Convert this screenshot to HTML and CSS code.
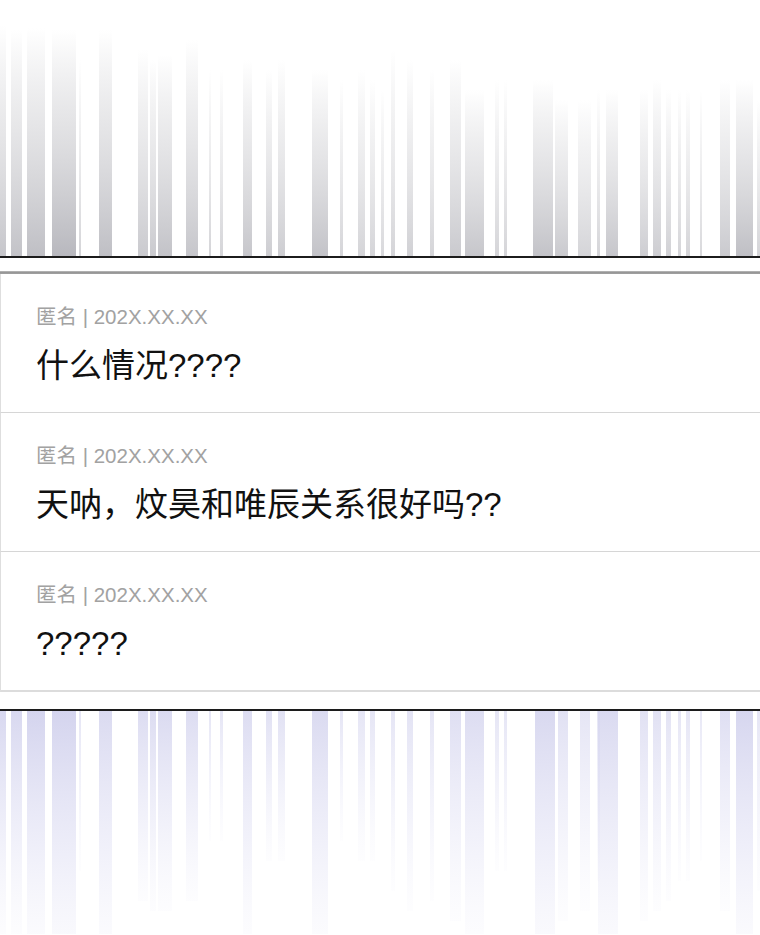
FILE: index.html
```html
<!DOCTYPE html>
<html lang="zh-CN">
<head>
    <meta charset="UTF-8">
    <meta name="viewport" content="width=device-width, initial-scale=1.0">
    <title>评论</title>
    <link rel="stylesheet" href="styles.css">
</head>
<body>
    <div class="stripes stripes-top">
        <svg viewBox="0 0 760 256" preserveAspectRatio="none" width="760" height="256">
            <defs>
                <linearGradient id="fadeGray" x1="0" y1="0" x2="0" y2="1">
                    <stop offset="0" stop-color="#c4c4c8" stop-opacity="0"/>
                    <stop offset="0.35" stop-color="#cacace" stop-opacity="0.45"/>
                    <stop offset="1" stop-color="#b8b8be" stop-opacity="1"/>
                </linearGradient>
            </defs>
            <g fill="url(#fadeGray)">
                <rect x="0" y="25" width="6" height="231" opacity="0.8"/>
                <rect x="11" y="30" width="11" height="226" opacity="0.85"/>
                <rect x="27" y="28" width="18" height="228" opacity="0.9"/>
                <rect x="52" y="30" width="24" height="226" opacity="1"/>
                <rect x="79" y="60" width="2" height="196" opacity="0.6"/>
                <rect x="99" y="30" width="13" height="226" opacity="0.9"/>
                <rect x="138" y="50" width="10" height="206" opacity="0.75"/>
                <rect x="150" y="60" width="6" height="196" opacity="0.75"/>
                <rect x="158" y="55" width="14" height="201" opacity="0.85"/>
                <rect x="186" y="40" width="12" height="216" opacity="0.8"/>
                <rect x="209" y="70" width="2" height="186" opacity="0.6"/>
                <rect x="220" y="70" width="3" height="186" opacity="0.6"/>
                <rect x="243" y="60" width="9" height="196" opacity="0.8"/>
                <rect x="266" y="70" width="6" height="186" opacity="0.7"/>
                <rect x="278" y="60" width="7" height="196" opacity="0.7"/>
                <rect x="312" y="70" width="16" height="186" opacity="0.85"/>
                <rect x="340" y="80" width="3" height="176" opacity="0.6"/>
                <rect x="358" y="70" width="7" height="186" opacity="0.6"/>
                <rect x="370" y="80" width="5" height="176" opacity="0.6"/>
                <rect x="381" y="90" width="3" height="166" opacity="0.55"/>
                <rect x="391" y="50" width="4" height="206" opacity="0.6"/>
                <rect x="407" y="60" width="6" height="196" opacity="0.65"/>
                <rect x="430" y="70" width="4" height="186" opacity="0.6"/>
                <rect x="450" y="60" width="11" height="196" opacity="0.75"/>
                <rect x="465" y="90" width="19" height="166" opacity="0.8"/>
                <rect x="495" y="80" width="4" height="176" opacity="0.6"/>
                <rect x="504" y="80" width="3" height="176" opacity="0.6"/>
                <rect x="533" y="80" width="20" height="176" opacity="0.85"/>
                <rect x="555" y="100" width="13" height="156" opacity="0.75"/>
                <rect x="578" y="100" width="13" height="156" opacity="0.6"/>
                <rect x="597" y="90" width="3" height="166" opacity="0.6"/>
                <rect x="606" y="90" width="12" height="166" opacity="0.8"/>
                <rect x="640" y="90" width="8" height="166" opacity="0.7"/>
                <rect x="653" y="80" width="8" height="176" opacity="0.7"/>
                <rect x="666" y="90" width="5" height="166" opacity="0.65"/>
                <rect x="678" y="90" width="3" height="166" opacity="0.6"/>
                <rect x="686" y="90" width="4" height="166" opacity="0.6"/>
                <rect x="700" y="90" width="2" height="166" opacity="0.55"/>
                <rect x="720" y="80" width="10" height="176" opacity="0.75"/>
                <rect x="736" y="80" width="17" height="176" opacity="0.9"/>
                <rect x="757" y="100" width="3" height="156" opacity="0.6"/>
            </g>
        </svg>
    </div>
    <div class="rule-dark"></div>
    <div class="spacer"></div>
    <div class="rule-gray"></div>

    <ul class="comments">
        <li class="comment">
            <div class="comment-meta">匿名 | 202X.XX.XX</div>
            <div class="comment-text">什么情况????</div>
        </li>
        <li class="comment">
            <div class="comment-meta">匿名 | 202X.XX.XX</div>
            <div class="comment-text">天呐，炆昊和唯辰关系很好吗??</div>
        </li>
        <li class="comment comment-last">
            <div class="comment-meta">匿名 | 202X.XX.XX</div>
            <div class="comment-text">?????</div>
        </li>
    </ul>

    <div class="spacer spacer-bottom"></div>
    <div class="rule-dark"></div>
    <div class="stripes stripes-bottom">
        <svg viewBox="0 0 760 223" preserveAspectRatio="none" width="760" height="223">
            <defs>
                <linearGradient id="fadeBlue" x1="0" y1="0" x2="0" y2="1">
                    <stop offset="0" stop-color="#d4d4ee" stop-opacity="1"/>
                    <stop offset="0.55" stop-color="#e0e0f4" stop-opacity="0.55"/>
                    <stop offset="1" stop-color="#ececf8" stop-opacity="0.15"/>
                </linearGradient>
            </defs>
            <g fill="url(#fadeBlue)">
                <rect x="0" y="0" width="6" height="223" opacity="0.9"/>
                <rect x="11" y="0" width="11" height="223" opacity="0.9"/>
                <rect x="27" y="0" width="18" height="240" opacity="1"/>
                <rect x="52" y="0" width="24" height="260" opacity="1"/>
                <rect x="79" y="0" width="2" height="160" opacity="0.6"/>
                <rect x="99" y="0" width="13" height="250" opacity="0.85"/>
                <rect x="138" y="0" width="10" height="190" opacity="0.8"/>
                <rect x="150" y="0" width="6" height="200" opacity="0.8"/>
                <rect x="158" y="0" width="14" height="200" opacity="0.85"/>
                <rect x="186" y="0" width="12" height="190" opacity="0.8"/>
                <rect x="209" y="0" width="2" height="130" opacity="0.6"/>
                <rect x="220" y="0" width="3" height="130" opacity="0.6"/>
                <rect x="243" y="0" width="9" height="230" opacity="0.8"/>
                <rect x="266" y="0" width="6" height="150" opacity="0.7"/>
                <rect x="278" y="0" width="7" height="150" opacity="0.7"/>
                <rect x="312" y="0" width="16" height="240" opacity="0.85"/>
                <rect x="340" y="0" width="3" height="130" opacity="0.6"/>
                <rect x="358" y="0" width="7" height="150" opacity="0.6"/>
                <rect x="370" y="0" width="5" height="150" opacity="0.6"/>
                <rect x="391" y="0" width="4" height="180" opacity="0.6"/>
                <rect x="407" y="0" width="6" height="200" opacity="0.65"/>
                <rect x="430" y="0" width="4" height="190" opacity="0.6"/>
                <rect x="450" y="0" width="11" height="210" opacity="0.75"/>
                <rect x="465" y="0" width="19" height="230" opacity="0.8"/>
                <rect x="495" y="0" width="4" height="160" opacity="0.6"/>
                <rect x="504" y="0" width="3" height="160" opacity="0.6"/>
                <rect x="535" y="0" width="20" height="260" opacity="0.9"/>
                <rect x="558" y="0" width="10" height="210" opacity="0.7"/>
                <rect x="580" y="0" width="10" height="200" opacity="0.6"/>
                <rect x="597" y="0" width="3" height="170" opacity="0.6"/>
                <rect x="598" y="0" width="20" height="260" opacity="0.85"/>
                <rect x="640" y="0" width="8" height="210" opacity="0.7"/>
                <rect x="653" y="0" width="8" height="200" opacity="0.7"/>
                <rect x="666" y="0" width="5" height="190" opacity="0.65"/>
                <rect x="678" y="0" width="3" height="170" opacity="0.6"/>
                <rect x="686" y="0" width="4" height="170" opacity="0.6"/>
                <rect x="700" y="0" width="2" height="150" opacity="0.55"/>
                <rect x="720" y="0" width="10" height="200" opacity="0.75"/>
                <rect x="736" y="0" width="17" height="250" opacity="0.95"/>
                <rect x="757" y="0" width="3" height="180" opacity="0.6"/>
            </g>
        </svg>
    </div>
</body>
</html>
```

FILE: styles.css
```css
body {
    margin: 0;
    width: 760px;
    background: #fff;
    font-family: "Liberation Sans", "Noto Sans CJK SC", Arial, sans-serif;
    color: #111;
    overflow: hidden;
}
.stripes {
    display: block;
    line-height: 0;
}
.stripes svg {
    display: block;
}
.stripes-top {
    height: 256px;
}
.stripes-bottom {
    height: 223px;
}
.rule-dark {
    height: 2px;
    background: #1c1c1c;
}
.spacer {
    height: 13px;
}
.spacer-bottom {
    height: 17px;
}
.rule-gray {
    height: 3px;
    background: linear-gradient(#bdbdbd, #8f8f8f 60%, #a8a8a8);
}
.comments {
    list-style: none;
    margin: 0;
    padding: 0;
}
.comment {
    padding: 31px 35px 26px;
    border-left: 1px solid #dedede;
    border-bottom: 1px solid #d6d6d6;
}
.comment-last {
    border-bottom: 2px solid #dcdcdc;
}
.comment-meta {
    font-size: 20.5px;
    line-height: 24px;
    color: #a2a2a2;
}
.comment-text {
    margin-top: 17px;
    font-size: 33px;
    line-height: 40px;
    color: #111;
}
```
